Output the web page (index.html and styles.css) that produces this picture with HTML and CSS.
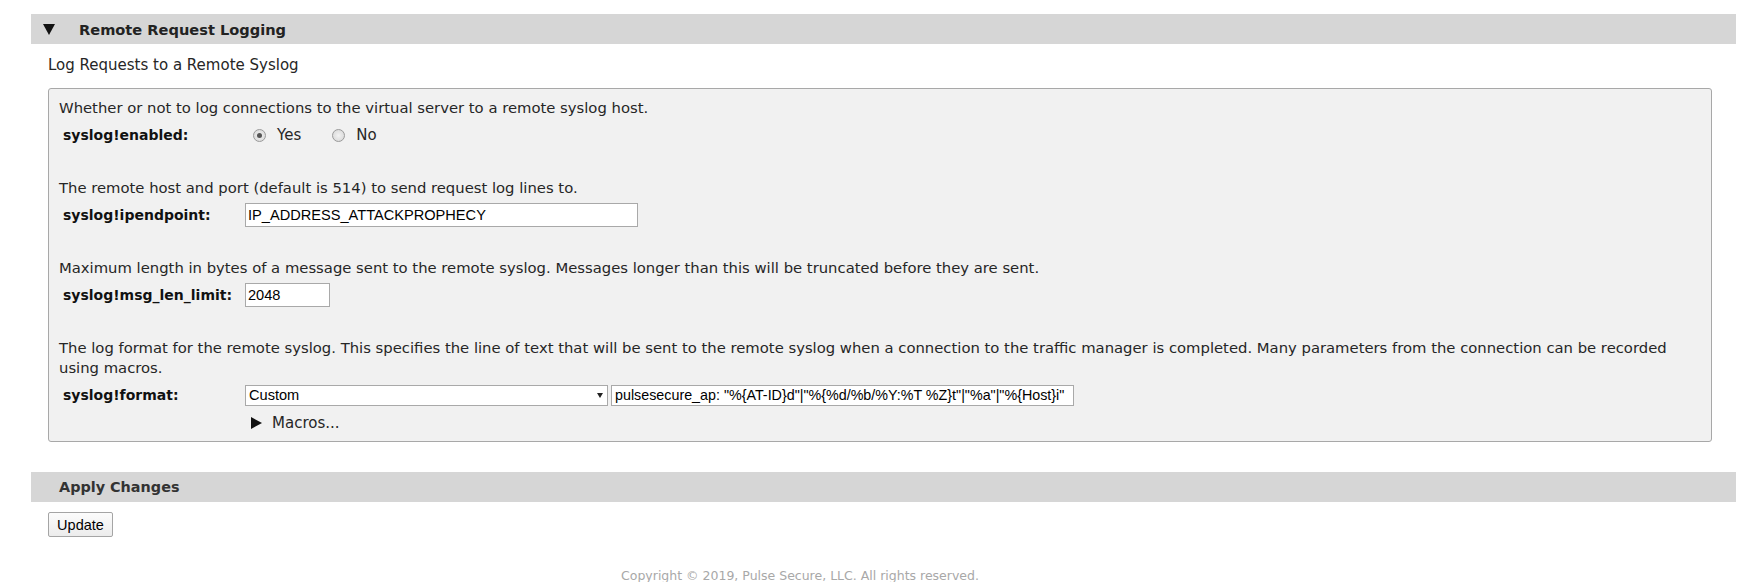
FILE: index.html
```html
<!DOCTYPE html>
<html lang="en">
<head>
    <meta charset="UTF-8">
    <title>Remote Request Logging</title>
    <link rel="stylesheet" href="styles.css">
</head>
<body>

    <div class="page">

        <!-- Remote Request Logging -->
        <div class="section-head">
            <span class="twisty-down"></span>
            <span>Remote Request Logging</span>
        </div>

        <div class="section-body">
            <p class="section-title">Log Requests to a Remote Syslog</p>

            <div class="panel">
                <div class="setting">
                    <div class="desc">Whether or not to log connections to the virtual server to a remote syslog host.</div>
                    <div class="row">
                        <label class="key">syslog!enabled:</label>
                        <div class="control">
                            <label class="radio"><input type="radio" name="enabled" checked> Yes</label>
                            <label class="radio"><input type="radio" name="enabled"> No</label>
                        </div>
                    </div>
                </div>

                <div class="setting">
                    <div class="desc">The remote host and port (default is 514) to send request log lines to.</div>
                    <div class="row">
                        <label class="key">syslog!ipendpoint:</label>
                        <div class="control">
                            <input class="text-field wide" type="text" value="IP_ADDRESS_ATTACKPROPHECY">
                        </div>
                    </div>
                </div>

                <div class="setting">
                    <div class="desc">Maximum length in bytes of a message sent to the remote syslog. Messages longer than this will be truncated before they are sent.</div>
                    <div class="row">
                        <label class="key">syslog!msg_len_limit:</label>
                        <div class="control">
                            <input class="text-field short" type="text" value="2048">
                        </div>
                    </div>
                </div>

                <div class="setting">
                    <div class="desc">The log format for the remote syslog. This specifies the line of text that will be sent to the remote syslog when a connection to the traffic manager is completed. Many parameters from the connection can be recorded using macros.</div>
                    <div class="row">
                        <label class="key">syslog!format:</label>
                        <div class="control">
                            <span class="select-box">
                                <select class="select-field">
                                    <option>Custom</option>
                                </select>
                                <span class="select-arrow"></span>
                            </span>
                            <input class="text-field format" type="text" value='pulsesecure_ap: "%{AT-ID}d"|"%{%d/%b/%Y:%T %Z}t"|"%a"|"%{Host}i"'>
                        </div>
                    </div>
                    <div class="macros">
                        <span class="twisty-right"></span>
                        <span>Macros...</span>
                    </div>
                </div>
            </div>
        </div>

        <!-- Apply Changes -->
        <div class="section-head apply">Apply Changes</div>
        <button class="update-btn" type="button">Update</button>
    </div>

    <div class="footer">Copyright &copy; 2019, Pulse Secure, LLC. All rights reserved.</div>

</body>
</html>
```

FILE: styles.css
```css
/* Trang */
body {
    margin: 0;
    background: #fff;
    color: #262626;
    font-family: "DejaVu Sans", sans-serif;
    font-size: 15px;
}

.page {
    padding: 14px 4px 0 31px;
}

/* Thanh tieu de */
.section-head {
    display: flex;
    align-items: center;
    height: 30px;
    padding-left: 12px;
    background: #d6d6d6;
    color: #222;
    font-size: 14.6px;
    font-weight: bold;
}

.section-head.apply {
    margin-top: 30px;
    padding-left: 28px;
    color: #333;
    font-size: 14.4px;
}

.twisty-down {
    width: 0;
    height: 0;
    margin-right: 24px;
    border-left: 6px solid transparent;
    border-right: 6px solid transparent;
    border-top: 11px solid #111;
}

.twisty-right {
    width: 0;
    height: 0;
    margin-right: 10px;
    border-top: 6px solid transparent;
    border-bottom: 6px solid transparent;
    border-left: 11px solid #111;
}

.section-body {
    padding: 0 24px 0 17px;
}

.section-title {
    margin: 0;
    padding-top: 11px;
    line-height: 20px;
}

/* Khung cai dat */
.panel {
    margin-top: 13px;
    padding: 7px 10px 8px 10px;
    background: #f1f1f1;
    border: 1px solid #a8a8a8;
    border-radius: 3px;
}

.setting + .setting {
    margin-top: 28px;
}

.desc {
    padding-top: 2px;
    font-size: 14.8px;
    line-height: 20px;
}

.row {
    display: flex;
    align-items: center;
    height: 26px;
    margin-top: 4px;
}

.key {
    flex: 0 0 186px;
    box-sizing: border-box;
    padding-left: 4px;
    color: #111;
    font-size: 14px;
    font-weight: bold;
}

.control {
    display: flex;
    align-items: center;
}

/* Nut radio */
.radio {
    display: flex;
    align-items: center;
    margin-right: 31px;
}

.radio input {
    appearance: none;
    position: relative;
    width: 13px;
    height: 13px;
    margin: 0 11px 0 0;
    border: 1px solid #9a9a9a;
    border-radius: 50%;
    background: radial-gradient(circle, #f2f2f2 0%, #d4d4d4 100%);
}

.radio:first-child input {
    margin-left: 8px;
}

.radio input:checked::after {
    content: "";
    position: absolute;
    top: 3px;
    left: 3px;
    width: 5px;
    height: 5px;
    border-radius: 50%;
    background: #555;
}

/* O nhap */
.text-field,
.select-field {
    box-sizing: border-box;
    margin: 0;
    padding: 0 2px;
    background: #fff;
    border: 1px solid #a9a9a9;
    border-radius: 0;
    color: #000;
    font-family: "Liberation Sans", Arial, sans-serif;
    font-size: 14.6px;
    outline: none;
}

.text-field.wide {
    width: 393px;
    height: 24px;
}

.text-field.short {
    width: 85px;
    height: 24px;
}

.text-field.format {
    width: 463px;
    height: 21px;
    margin-left: 3px;
    padding: 0 0 0 3px;
    font-size: 14.3px;
}

.select-box {
    position: relative;
    display: inline-block;
}

.select-field {
    appearance: none;
    display: block;
    width: 363px;
    height: 21px;
    padding-left: 3px;
}

.select-arrow {
    position: absolute;
    top: 8px;
    right: 5px;
    width: 0;
    height: 0;
    border-left: 3px solid transparent;
    border-right: 3px solid transparent;
    border-top: 5px solid #222;
}

.macros {
    display: flex;
    align-items: center;
    margin: 5px 0 0 192px;
    line-height: 20px;
}

/* Nut cap nhat */
.update-btn {
    display: block;
    width: 65px;
    height: 25px;
    margin: 10px 0 0 17px;
    padding: 0;
    background: linear-gradient(#fcfcfc, #ececec);
    border: 1px solid #a5a5a5;
    border-radius: 2px;
    color: #000;
    font-family: "Liberation Sans", Arial, sans-serif;
    font-size: 14.5px;
}

/* Chan trang */
.footer {
    margin-top: 31px;
    padding-right: 140px;
    color: #a8a8a8;
    font-size: 12.5px;
    line-height: 16px;
    text-align: center;
}
```
